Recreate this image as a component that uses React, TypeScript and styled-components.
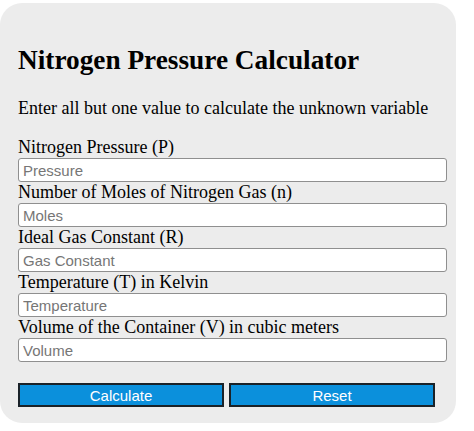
import React, { useState } from 'react';
import styled, { createGlobalStyle } from 'styled-components';

const GlobalStyle = createGlobalStyle`
  html, body {
    margin: 0;
    padding: 0;
    background: #ffffff;
  }
  body {
    font-family: "Liberation Serif", "Times New Roman", serif;
    color: #000;
  }
`;

const Page = styled.div`
  padding-top: 3px;
`;

const Card = styled.div`
  width: 456px;
  height: 420px;
  box-sizing: border-box;
  background-color: #ececec;
  border-radius: 22px;
  padding: 41px 9px 0 18px;
`;

const Title = styled.h2`
  margin: 0;
  font-size: 27.3px;
  font-weight: bold;
  line-height: 32px;
`;

const Intro = styled.p`
  margin: 22px 0 18px;
  font-size: 18px;
  line-height: 21px;
`;

const Field = styled.div`
  display: flex;
  flex-direction: column;
`;

const Label = styled.label`
  display: block;
  font-size: 18px;
  line-height: 21px;
  height: 21px;
`;

const Input = styled.input`
  box-sizing: border-box;
  width: 429px;
  height: 24px;
  margin: 0;
  padding: 0 4px;
  border: 1px solid #8f8f8f;
  border-radius: 3px;
  background: #fff;
  font-family: "Liberation Sans", Arial, sans-serif;
  font-size: 15px;
  color: #222;
  outline: none;

  &::placeholder {
    color: #767676;
  }
`;

const Buttons = styled.div`
  display: flex;
  gap: 5px;
  margin-top: 21px;
`;

const Button = styled.button`
  box-sizing: border-box;
  width: 206px;
  height: 24px;
  margin: 0;
  padding: 0;
  background-color: #0b90dc;
  border: 2px solid #1a2228;
  color: #fff;
  font-family: "Liberation Sans", Arial, sans-serif;
  font-size: 15px;
  cursor: pointer;
`;

const fields = [
  { label: 'Nitrogen Pressure (P)', placeholder: 'Pressure' },
  { label: 'Number of Moles of Nitrogen Gas (n)', placeholder: 'Moles' },
  { label: 'Ideal Gas Constant (R)', placeholder: 'Gas Constant' },
  { label: 'Temperature (T) in Kelvin', placeholder: 'Temperature' },
  { label: 'Volume of the Container (V) in cubic meters', placeholder: 'Volume' },
];

const App: React.FC = () => {
  const [values, setValues] = useState<string[]>(fields.map(() => ''));

  const handleChange = (i: number, v: string) => {
    const next = [...values];
    next[i] = v;
    setValues(next);
  };

  const handleReset = () => setValues(fields.map(() => ''));

  return (
    <>
      <GlobalStyle />
      <Page>
        <Card>
          <Title>Nitrogen Pressure Calculator</Title>
          <Intro>Enter all but one value to calculate the unknown variable</Intro>
          {fields.map((f, i) => (
            <Field key={f.label}>
              <Label>{f.label}</Label>
              <Input
                placeholder={f.placeholder}
                value={values[i]}
                onChange={(e) => handleChange(i, e.target.value)}
              />
            </Field>
          ))}
          <Buttons>
            <Button>Calculate</Button>
            <Button onClick={handleReset}>Reset</Button>
          </Buttons>
        </Card>
      </Page>
    </>
  );
};

export default App;
